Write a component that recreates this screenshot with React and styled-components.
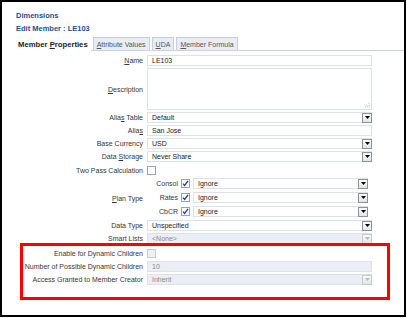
import { Fragment } from "react";
import styled, { createGlobalStyle } from "styled-components";

const GlobalStyle = createGlobalStyle`
  html, body {
    margin: 0;
    padding: 0;
    background: #fff;
  }
  body {
    font-family: "Liberation Sans", Arial, sans-serif;
    font-size: 7px;
    color: #363636;
  }
`;

const Frame = styled.div`
  position: relative;
  box-sizing: border-box;
  width: 406px;
  height: 317px;
  border: 2px solid #000;
  padding: 9px 0 0 14px;
`;

const Title = styled.div`
  font-weight: bold;
  font-size: 7.5px;
  color: #1f4f8f;
  line-height: 10px;
  height: 13px;
`;

const Tabs = styled.div`
  display: flex;
  align-items: flex-end;
  gap: 2px;
  height: 13px;
  margin-left: -1px;
  border-bottom: 1px solid #c8d3e2;
`;

const Tab = styled.div`
  box-sizing: border-box;
  padding: 0 ${(p) => (p.$active ? "2px" : "3px")};
  display: flex;
  align-items: center;
  border: 1px solid ${(p) => (p.$active ? "#fff" : "#c5cfdd")};
  border-bottom: none;
  background: ${(p) => (p.$active ? "#fff" : "#e9edf3")};
  font-weight: ${(p) => (p.$active ? "bold" : "normal")};
  font-size: ${(p) => (p.$active ? "7.7px" : "7px")};
  color: ${(p) => (p.$active ? "#222" : "#555")};
  margin-bottom: ${(p) => (p.$active ? "-1px" : "0")};
  height: ${(p) => (p.$active ? "14px" : "13px")};
`;

const U = styled.span`
  text-decoration: underline;
`;

const Form = styled.div`
  display: grid;
  grid-template-columns: 127px 225px;
  column-gap: 4px;
  row-gap: 2px;
  margin-top: 4px;
  align-items: center;
`;

const Label = styled.div`
  text-align: right;
  white-space: nowrap;
  line-height: 11px;
`;

const Input = styled.div`
  box-sizing: border-box;
  height: 11px;
  width: ${(p) => p.$width || "225px"};
  border: 1px solid #dde2ea;
  background: ${(p) => (p.$disabled ? "#eceef5" : "#fff")};
  color: ${(p) => (p.$disabled ? "#8a8a8a" : "#222")};
  padding-left: 4px;
  line-height: 9px;
  white-space: nowrap;
`;

const TextArea = styled.div`
  box-sizing: border-box;
  position: relative;
  height: 42px;
  border: 1px solid #dde2ea;
  background: #fff;
`;

const Grip = styled.svg`
  position: absolute;
  right: 1px;
  bottom: 1px;
`;

const SelectBox = styled.div`
  box-sizing: border-box;
  height: 11px;
  width: ${(p) => p.$width || "225px"};
  display: flex;
  align-items: center;
  border: 1px solid #dde2ea;
  background: ${(p) => (p.$disabled ? "#eceef5" : "#fff")};
  color: ${(p) => (p.$disabled ? "#8a8a8a" : "#222")};
  padding-left: 4px;
`;

const SelectText = styled.span`
  flex: 1;
  line-height: 9px;
  white-space: nowrap;
`;

const DropButton = styled.div`
  box-sizing: border-box;
  width: 10px;
  height: 10px;
  margin-right: -1px;
  border: 1px solid ${(p) => (p.$disabled ? "#c4c8ce" : "#8d9096")};
  background: linear-gradient(#fbfbfb, #e2e4e8);
  display: flex;
  align-items: center;
  justify-content: center;
`;

const Check = styled.div`
  box-sizing: border-box;
  width: 9px;
  height: 9px;
  border: 1px solid ${(p) => (p.$disabled ? "#c6ccd6" : "#98a4b6")};
  background: ${(p) => (p.$disabled ? "#eef0f4" : "#fff")};
  display: flex;
  align-items: center;
  justify-content: center;
`;

const FieldCell = styled.div`
  height: ${(p) => p.$h || "11px"};
  display: flex;
  align-items: center;
`;

const PlanGrid = styled.div`
  display: grid;
  grid-template-columns: 31px 9px 175px;
  column-gap: 3px;
  row-gap: 3px;
  align-items: center;
  padding-bottom: 1px;
`;

const Spacer = styled.div`
  height: ${(p) => p.$h};
`;

const Highlight = styled.div`
  position: absolute;
  left: 18px;
  top: 241px;
  width: 370px;
  height: 57px;
  box-sizing: border-box;
  border: 3px solid #f00;
`;

const Select = ({ value, width, disabled }) => (
  <SelectBox $width={width} $disabled={disabled}>
    <SelectText>{value}</SelectText>
    <DropButton $disabled={disabled}>
      <svg width="5" height="3" viewBox="0 0 5 3">
        <path d="M0 0h5L2.5 3z" fill={disabled ? "#b5b9c0" : "#000"} />
      </svg>
    </DropButton>
  </SelectBox>
);

const CheckBox = ({ checked, disabled }) => (
  <Check $disabled={disabled}>
    {checked && (
      <svg width="7" height="7" viewBox="0 0 7 7">
        <path d="M1 3.6l1.6 1.8L6 0.8" stroke="#1b3fb0" strokeWidth="1.4" fill="none" />
      </svg>
    )}
  </Check>
);

const planTypes = ["Consol", "Rates", "CbCR"];

const App = () => {
  return (
    <>
      <GlobalStyle />
      <Frame>
        <Title>Dimensions</Title>
        <Title>Edit Member : LE103</Title>
        <Tabs>
          <Tab $active>
            Member&nbsp;<U>P</U>roperties
          </Tab>
          <Tab>
            <U>A</U>ttribute Values
          </Tab>
          <Tab>
            <U>U</U>DA
          </Tab>
          <Tab>
            <U>M</U>ember Formula
          </Tab>
        </Tabs>
        <Form>
          <Label>
            <U>N</U>ame
          </Label>
          <Input>LE103</Input>

          <Label>
            <U>D</U>escription
          </Label>
          <TextArea>
            <Grip width="5" height="5" viewBox="0 0 5 5">
              <path d="M4 0v1M2 2v1M4 2v1M0 4h1M2 4h1M4 4h1" stroke="#b9bec8" strokeWidth="1" />
            </Grip>
          </TextArea>

          <Label>
            Alia<U>s</U> Table
          </Label>
          <Select value="Default" />

          <Label>
            Alia<U>s</U>
          </Label>
          <Input>San Jose</Input>

          <Label>Base Currency</Label>
          <Select value="USD" />

          <Label>
            Data <U>S</U>torage
          </Label>
          <Select value="Never Share" />

          <Label>Two Pass Calculation</Label>
          <FieldCell $h="12px">
            <CheckBox />
          </FieldCell>

          <Label>
            <U>P</U>lan Type
          </Label>
          <PlanGrid>
            {planTypes.map((p) => (
              <Fragment key={p}>
                <Label>{p}</Label>
                <CheckBox checked />
                <Select value="Ignore" width="175px" />
              </Fragment>
            ))}
          </PlanGrid>

          <Label>Data Type</Label>
          <Select value="Unspecified" />

          <Label>Smart Lists</Label>
          <Select value="<None>" disabled />

          <Spacer $h="0" />
          <Spacer $h="0" />

          <Label>Enable for Dynamic Children</Label>
          <FieldCell>
            <CheckBox disabled />
          </FieldCell>

          <Label>Number of Possible Dynamic Children</Label>
          <Input $disabled>10</Input>

          <Label>Access Granted to Member Creator</Label>
          <Select value="Inherit" disabled />
        </Form>
        <Highlight />
      </Frame>
    </>
  );
};

export default App;
